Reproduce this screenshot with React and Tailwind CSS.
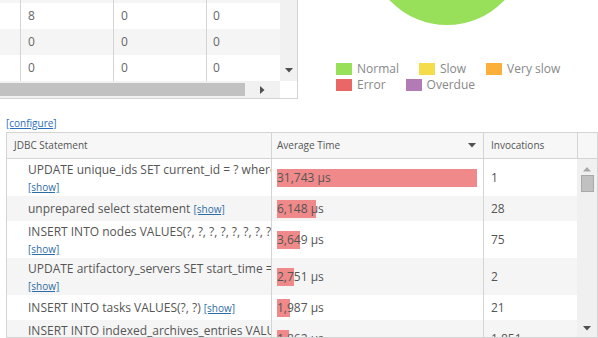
import React from 'react';

const topRows = [
  { a: '8', b: '0', c: '0', bg: 'bg-white' },
  { a: '0', b: '0', c: '0', bg: 'bg-[#f5f5f5]' },
  { a: '0', b: '0', c: '0', bg: 'bg-white' },
];

const legend = [
  { label: 'Normal', color: 'bg-[#99e05a]' },
  { label: 'Slow', color: 'bg-[#f5dc4c]' },
  { label: 'Very slow', color: 'bg-[#fbb03b]' },
  { label: 'Error', color: 'bg-[#e96767]' },
  { label: 'Overdue', color: 'bg-[#b37bb5]' },
];

const statements = [
  { sql: 'UPDATE unique_ids SET current_id = ? where index_type = ?', time: 31743, inv: '1' },
  { sql: 'unprepared select statement', time: 6148, inv: '28' },
  { sql: 'INSERT INTO nodes VALUES(?, ?, ?, ?, ?, ?, ?, ?, ?, ?, ?, ?)', time: 3649, inv: '75' },
  { sql: 'UPDATE artifactory_servers SET start_time = ?, last_heartbeat = ?', time: 2751, inv: '2' },
  { sql: 'INSERT INTO tasks VALUES(?, ?)', time: 1987, inv: '21' },
  { sql: 'INSERT INTO indexed_archives_entries VALUES(?, ?, ?)', time: 1862, inv: '1,851' },
];

const maxTime = 31743;

const TriDown = ({ color = '#505050' }) => (
  <svg width="8" height="5" viewBox="0 0 8 5">
    <path d="M0 0 L8 0 L4 4.5 Z" fill={color} />
  </svg>
);

const TriUp = ({ color = '#a8a8a8' }) => (
  <svg width="8" height="5" viewBox="0 0 8 5">
    <path d="M0 4.5 L8 4.5 L4 0 Z" fill={color} />
  </svg>
);

const TriRight = () => (
  <svg width="5" height="8" viewBox="0 0 5 8">
    <path d="M0 0 L0 8 L4.5 4 Z" fill="#505050" />
  </svg>
);

const TopTable = () => (
  <div className="w-[298px] h-[99px] flex border-r border-b border-[#d4d4d4]">
    <div className="w-[280px] flex flex-col">
      <div className="h-[81px] flex flex-col">
        <div className="h-[3px] grid grid-cols-[21px_93px_93px_73px] bg-[#f5f5f5]">
          <div className="border-r border-[#d4d4d4]" />
          <div className="border-r border-[#d4d4d4]" />
          <div className="border-r border-[#d4d4d4]" />
          <div />
        </div>
        {topRows.map((r, i) => (
          <div
            key={i}
            className={`h-[26px] grid grid-cols-[21px_93px_93px_73px] text-[12px] text-[#666] ${r.bg}`}
          >
            <div className="border-r border-[#d4d4d4]" />
            <div className="border-r border-[#d4d4d4] pl-[7px] flex items-center">{r.a}</div>
            <div className="border-r border-[#d4d4d4] pl-[7px] flex items-center">{r.b}</div>
            <div className="pl-[6px] flex items-center">{r.c}</div>
          </div>
        ))}
      </div>
      <div className="h-[17px] bg-[#f1f1f1] flex items-center">
        <div className="w-[245px] h-[13px] bg-[#c1c1c1]" />
        <div className="flex-1 flex justify-center">
          <TriRight />
        </div>
      </div>
    </div>
    <div className="w-[17px] flex flex-col">
      <div className="h-[81px] bg-[#f1f1f1] flex flex-col justify-end items-center pb-[8px]">
        <TriDown />
      </div>
      <div className="flex-1 bg-white" />
    </div>
  </div>
);

const Chart = () => (
  <div className="flex-1 flex flex-col">
    <svg width="300" height="30" viewBox="0 0 300 30">
      <circle cx="149" cy="-54" r="79" fill="#99e05a" />
    </svg>
    <div className="ml-[38px] mt-[33px] w-[240px] flex flex-wrap gap-x-[20px] gap-y-[4px]">
      {legend.map((l) => (
        <div key={l.label} className="flex items-center gap-[5px] h-[12px]">
          <div className={`w-[16px] h-[12px] ${l.color}`} />
          <span className="text-[12px] leading-[12px] text-[#888]">{l.label}</span>
        </div>
      ))}
    </div>
  </div>
);

const StatementRow = ({ s, i }) => (
  <div className={`grid grid-cols-[264px_212px_94px] ${i % 2 === 1 ? 'bg-[#f5f5f5]' : 'bg-white'}`}>
    <div className="pl-[21px] py-[1.5px] overflow-hidden text-[12px] leading-[17px] text-[#555] min-h-[25px] flex items-center">
      <div className="overflow-hidden">
        <span className="whitespace-nowrap">{s.sql}</span>{' '}
        <a href="#" className="text-[10px] leading-[12px] text-[#2d6da3] underline">[show]</a>
      </div>
    </div>
    <div className="border-l border-[#d4d4d4] px-[5px] py-[3.5px] flex items-center">
      <div className="relative h-[18px] w-full text-[12px] leading-[18px]">
        <div className="absolute left-0 top-0 h-[18px] bg-[#f08a8a]" style={{ width: `${(s.time / maxTime) * 200}px` }} />
        <span className="relative block text-[#555]">{s.time.toLocaleString('en-US')} µs</span>
      </div>
    </div>
    <div className="border-l border-[#d4d4d4] pl-[7px] flex items-center text-[12px] text-[#555]">{s.inv}</div>
  </div>
);

const JdbcTable = () => (
  <div className="ml-[6px] w-[592px] h-[206px] border border-[#d4d4d4] flex flex-col">
    <div className="h-[26px] grid grid-cols-[264px_212px_94px_1fr] bg-[#f7f7f7] border-b border-[#d4d4d4] text-[10px] text-[#555]">
      <div className="pl-[7px] flex items-center">JDBC Statement</div>
      <div className="border-l border-[#d4d4d4] pl-[5px] pr-[7px] flex items-center justify-between">
        <span>Average Time</span>
        <TriDown />
      </div>
      <div className="border-l border-[#d4d4d4] pl-[7px] flex items-center">Invocations</div>
      <div className="border-l border-[#d4d4d4]" />
    </div>
    <div className="h-[178px] flex overflow-hidden">
      <div className="w-[570px] overflow-hidden">
        {statements.map((s, i) => (
          <StatementRow key={i} s={s} i={i} />
        ))}
      </div>
      <div className="flex-1 bg-[#f0f0f0] flex flex-col items-center pt-[8px]">
        <TriUp />
        <div className="mt-[3px] w-[13px] h-[17px] bg-[#c1c1c1] border border-[#a9a9a9]" />
        <div className="flex-1" />
        <div className="pb-[6px]">
          <TriDown />
        </div>
      </div>
    </div>
  </div>
);

export default function App() {
  return (
    <div className="w-[598px] h-[338px] overflow-hidden bg-white font-['Open_Sans',sans-serif]">
      <div className="h-[114px] flex">
        <TopTable />
        <Chart />
      </div>
      <div className="h-[18px] pl-[6px] flex items-center">
        <a href="#" className="text-[10px] leading-[14px] text-[#2a6ebb] underline">[configure]</a>
      </div>
      <JdbcTable />
    </div>
  );
}
